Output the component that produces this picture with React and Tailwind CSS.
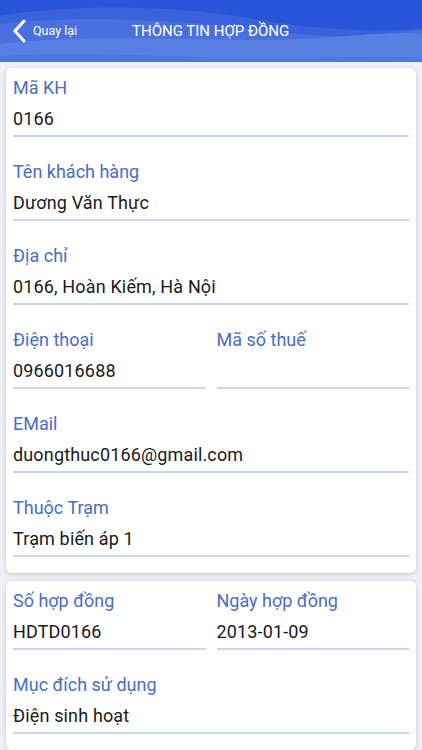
import React from "react";

const customer = [
  { label: "Mã KH", value: "0166" },
  { label: "Tên khách hàng", value: "Dương Văn Thực" },
  { label: "Địa chỉ", value: "0166, Hoàn Kiếm, Hà Nội" },
  [
    { label: "Điện thoại", value: "0966016688" },
    { label: "Mã số thuế", value: "" },
  ],
  { label: "EMail", value: "duongthuc0166@gmail.com" },
  { label: "Thuộc Trạm", value: "Trạm biến áp 1" },
];

const contract = [
  [
    { label: "Số hợp đồng", value: "HDTD0166" },
    { label: "Ngày hợp đồng", value: "2013-01-09" },
  ],
  { label: "Mục đích sử dụng", value: "Điện sinh hoạt" },
];

const Field = ({ label, value }) => (
  <div className="flex-1 min-w-0">
    <div className="text-[18px] leading-[24px] text-[#4a6dc6]">{label}</div>
    <div className="mt-[7px] h-[24px] text-[18px] leading-[24px] text-[#1a1a1a] tracking-[0.15px]">
      {value}
    </div>
    <div className="mt-[4px] h-[2px] bg-[#c9d6f0]" />
  </div>
);

const Rows = ({ items }) => (
  <div className="flex flex-col gap-[23px]">
    {items.map((it, i) =>
      Array.isArray(it) ? (
        <div key={i} className="flex gap-[11px]">
          {it.map((f) => (
            <Field key={f.label} {...f} />
          ))}
        </div>
      ) : (
        <Field key={i} {...it} />
      )
    )}
  </div>
);

const HeaderWaves = () => (
  <svg
    className="absolute inset-0 w-full h-full"
    viewBox="0 0 422 62"
    preserveAspectRatio="none"
  >
    <rect width="422" height="62" fill="#2855d8" />
    <path d="M0 16 C70 4 170 4 260 20 C330 32 390 32 422 28 L422 62 L0 62 Z" fill="#3a63db" />
    <path d="M0 24 C110 12 230 26 300 34 C360 40 400 32 422 30 L422 62 L0 62 Z" fill="#4a70dd" />
    <path d="M0 44 C80 34 180 40 260 40 C330 40 390 30 422 34 L422 62 L0 62 Z" fill="#5880e3" />
    <path d="M0 56 C100 50 200 60 300 58 C360 57 400 56 422 58 L422 62 L0 62 Z" fill="#4f76df" />
  </svg>
);

export default function App() {
  return (
    <div
      className="min-h-[750px] bg-[#eef0f6]"
      style={{ fontFamily: "Roboto, 'Liberation Sans', sans-serif" }}
    >
      <div className="relative h-[62px] overflow-hidden">
        <HeaderWaves />
        <div className="relative flex items-center h-full">
          <div className="flex items-center pl-[12px] w-[132px]">
            <svg width="15" height="24" viewBox="0 0 15 24" fill="none">
              <path
                d="M12 2 L3 12 L12 22"
                stroke="#fff"
                strokeWidth="3"
                strokeLinecap="round"
                strokeLinejoin="round"
              />
            </svg>
            <span className="ml-[6px] text-[12.5px] text-white">Quay lại</span>
          </div>
          <span className="text-[15px] text-white">THÔNG TIN HỢP ĐỒNG</span>
        </div>
      </div>

      <div className="px-[6px] pt-[6px] flex flex-col gap-[8px]">
        <div className="bg-white rounded-[6px] shadow-[0_1px_4px_rgba(0,0,0,0.18)] px-[7px] pt-[8px] pb-[16px]">
          <Rows items={customer} />
        </div>
        <div className="bg-white rounded-[6px] shadow-[0_1px_4px_rgba(0,0,0,0.18)] px-[7px] pt-[8px] pb-[16px]">
          <Rows items={contract} />
        </div>
      </div>
    </div>
  );
}
